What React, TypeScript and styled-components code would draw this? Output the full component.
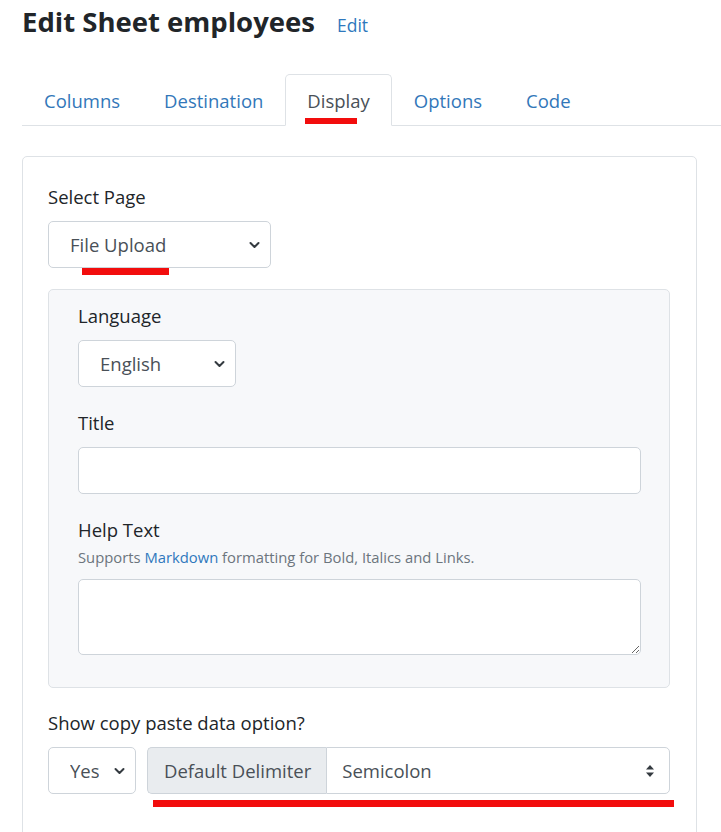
import React from "react";
import styled, { createGlobalStyle } from "styled-components";

const Global = createGlobalStyle`
  html, body { margin: 0; padding: 0; background: #fff; }
  body { font-family: "Open Sans", "Noto Sans", sans-serif; color: #212529; }
  * { box-sizing: border-box; }
`;

const Page = styled.div`
  padding: 0 0 0 22px;
  width: 721px;
  overflow: hidden;
`;

const Header = styled.div`
  display: flex;
  align-items: baseline;
  gap: 22px;
  height: 74px;
  padding-top: 2px;
`;

const Title = styled.h1`
  margin: 0;
  font-size: 27.5px;
  font-weight: 700;
  line-height: 40px;
  color: #212529;
`;

const HeaderLink = styled.a`
  font-size: 17.5px;
  color: #2f78bd;
  text-decoration: none;
`;

const Tabs = styled.nav`
  display: flex;
  border-bottom: 1px solid #dee2e6;
`;

const Tab = styled.a<{ $active?: boolean }>`
  position: relative;
  display: block;
  padding: 10px 21px 9px;
  margin-bottom: -1px;
  font-size: 18.5px;
  line-height: 31px;
  text-decoration: none;
  border: 1px solid ${(p) => (p.$active ? "#dee2e6" : "transparent")};
  border-bottom-color: ${(p) => (p.$active ? "#fff" : "transparent")};
  border-radius: 5px 5px 0 0;
  background: ${(p) => (p.$active ? "#fff" : "transparent")};
  color: ${(p) => (p.$active ? "#495057" : "#3277b9")};
`;

const Mark = styled.span<{ $left: number; $top: number; $width: number; $h?: number }>`
  position: absolute;
  left: ${(p) => p.$left}px;
  top: ${(p) => p.$top}px;
  width: ${(p) => p.$width}px;
  height: ${(p) => p.$h ?? 6}px;
  background: #f20d0d;
  pointer-events: none;
`;

const Card = styled.div`
  margin-top: 30px;
  width: 675px;
  border: 1px solid #dee2e6;
  border-radius: 5px;
  padding: 25px 25px 60px;
`;

const Group = styled.div<{ $mb?: number }>`
  position: relative;
  margin-bottom: ${(p) => p.$mb ?? 21}px;
`;

const Label = styled.label<{ $mb?: number }>`
  display: block;
  font-size: 18.5px;
  line-height: 30px;
  color: #212529;
  margin-bottom: ${(p) => p.$mb ?? 9}px;
`;

const Help = styled.div`
  font-size: 14.8px;
  line-height: 23px;
  color: #6c757d;
  margin-top: 1px;
  margin-bottom: 10px;
`;

const HelpLink = styled.a`
  color: #2f78bd;
  text-decoration: none;
`;

const SelectWrap = styled.div<{ $width?: number; $flex?: boolean }>`
  position: relative;
  width: ${(p) => (p.$flex ? "auto" : `${p.$width}px`)};
  flex: ${(p) => (p.$flex ? "1" : "none")};
  height: 47px;
`;

const NativeSelect = styled.select<{ $pl?: number; $group?: boolean }>`
  appearance: none;
  -webkit-appearance: none;
  width: 100%;
  height: 47px;
  padding: 0 36px 0 ${(p) => p.$pl ?? 21}px;
  font-family: inherit;
  font-size: 18.5px;
  color: #495057;
  background: #fff;
  border: 1px solid #ced4da;
  border-radius: ${(p) => (p.$group ? "0 5px 5px 0" : "5px")};
  outline: none;
`;

const Caret = styled.svg`
  position: absolute;
  right: 11px;
  top: 50%;
  transform: translateY(-50%);
  pointer-events: none;
`;

const Input = styled.input`
  display: block;
  width: 100%;
  height: 47px;
  padding: 0 15px;
  font-family: inherit;
  font-size: 18.5px;
  color: #495057;
  background: #fff;
  border: 1px solid #ced4da;
  border-radius: 5px;
  outline: none;
`;

const TextArea = styled.textarea`
  display: block;
  width: 100%;
  height: 76px;
  padding: 8px 15px;
  font-family: inherit;
  font-size: 18.5px;
  color: #495057;
  background: #fff;
  border: 1px solid #ced4da;
  border-radius: 5px;
  outline: none;
`;

const Panel = styled.div`
  width: 622px;
  background: #f7f8fa;
  border: 1px solid #dee2e6;
  border-radius: 5px;
  padding: 11px 28px 11px 29px;
  margin-bottom: 20px;
`;

const Row = styled.div`
  position: relative;
  display: flex;
  gap: 11px;
  width: 622px;
`;

const InputGroup = styled.div`
  display: flex;
  flex: 1;
`;

const Addon = styled.span`
  display: flex;
  align-items: center;
  height: 47px;
  padding: 0 15px 0 16px;
  font-size: 18.5px;
  color: #495057;
  background: #e9ecef;
  border: 1px solid #ced4da;
  border-right: none;
  border-radius: 5px 0 0 5px;
  white-space: nowrap;
`;

const Chevron = () => (
  <Caret width="11" height="8" viewBox="0 0 11 8">
    <path d="M1.5 2 L5.5 6 L9.5 2" fill="none" stroke="#343a40" strokeWidth="2" strokeLinecap="round" strokeLinejoin="round" />
  </Caret>
);

const UpDown = () => (
  <Caret width="10" height="14" viewBox="0 0 10 14" style={{ right: 15 }}>
    <path d="M5 1 L9 5.5 H1 Z" fill="#343a40" />
    <path d="M5 13 L9 8.5 H1 Z" fill="#343a40" />
  </Caret>
);

export default function App() {
  return (
    <Page>
      <Global />
      <Header>
        <Title>Edit Sheet employees</Title>
        <HeaderLink href="#">Edit</HeaderLink>
      </Header>
      <Tabs>
        <Tab href="#">Columns</Tab>
        <Tab href="#">Destination</Tab>
        <Tab href="#" $active>
          Display
          <Mark $left={19} $top={43} $width={52} />
        </Tab>
        <Tab href="#">Options</Tab>
        <Tab href="#">Code</Tab>
      </Tabs>
      <Card>
        <Group>
          <Label>Select Page</Label>
          <SelectWrap $width={223}>
            <NativeSelect defaultValue="File Upload">
              <option>File Upload</option>
            </NativeSelect>
            <Chevron />
          </SelectWrap>
          <Mark $left={34} $top={86} $width={87} $h={7} />
        </Group>
        <Panel>
          <Group>
            <Label>Language</Label>
            <SelectWrap $width={158}>
              <NativeSelect defaultValue="English">
                <option>English</option>
              </NativeSelect>
              <Chevron />
            </SelectWrap>
          </Group>
          <Group>
            <Label>Title</Label>
            <Input type="text" />
          </Group>
          <Group>
            <Label $mb={0}>Help Text</Label>
            <Help>
              Supports <HelpLink href="#">Markdown</HelpLink> formatting for Bold, Italics and Links.
            </Help>
            <TextArea />
          </Group>
        </Panel>
        <Group>
          <Label>Show copy paste data option?</Label>
          <Row>
            <SelectWrap $width={88}>
              <NativeSelect defaultValue="Yes">
                <option>Yes</option>
              </NativeSelect>
              <Chevron />
            </SelectWrap>
            <InputGroup>
              <Addon>Default Delimiter</Addon>
              <SelectWrap $flex>
                <NativeSelect $pl={15} $group defaultValue="Semicolon">
                  <option>Semicolon</option>
                </NativeSelect>
                <UpDown />
              </SelectWrap>
            </InputGroup>
            <Mark $left={105} $top={53} $width={521} $h={7} />
          </Row>
        </Group>
      </Card>
    </Page>
  );
}
